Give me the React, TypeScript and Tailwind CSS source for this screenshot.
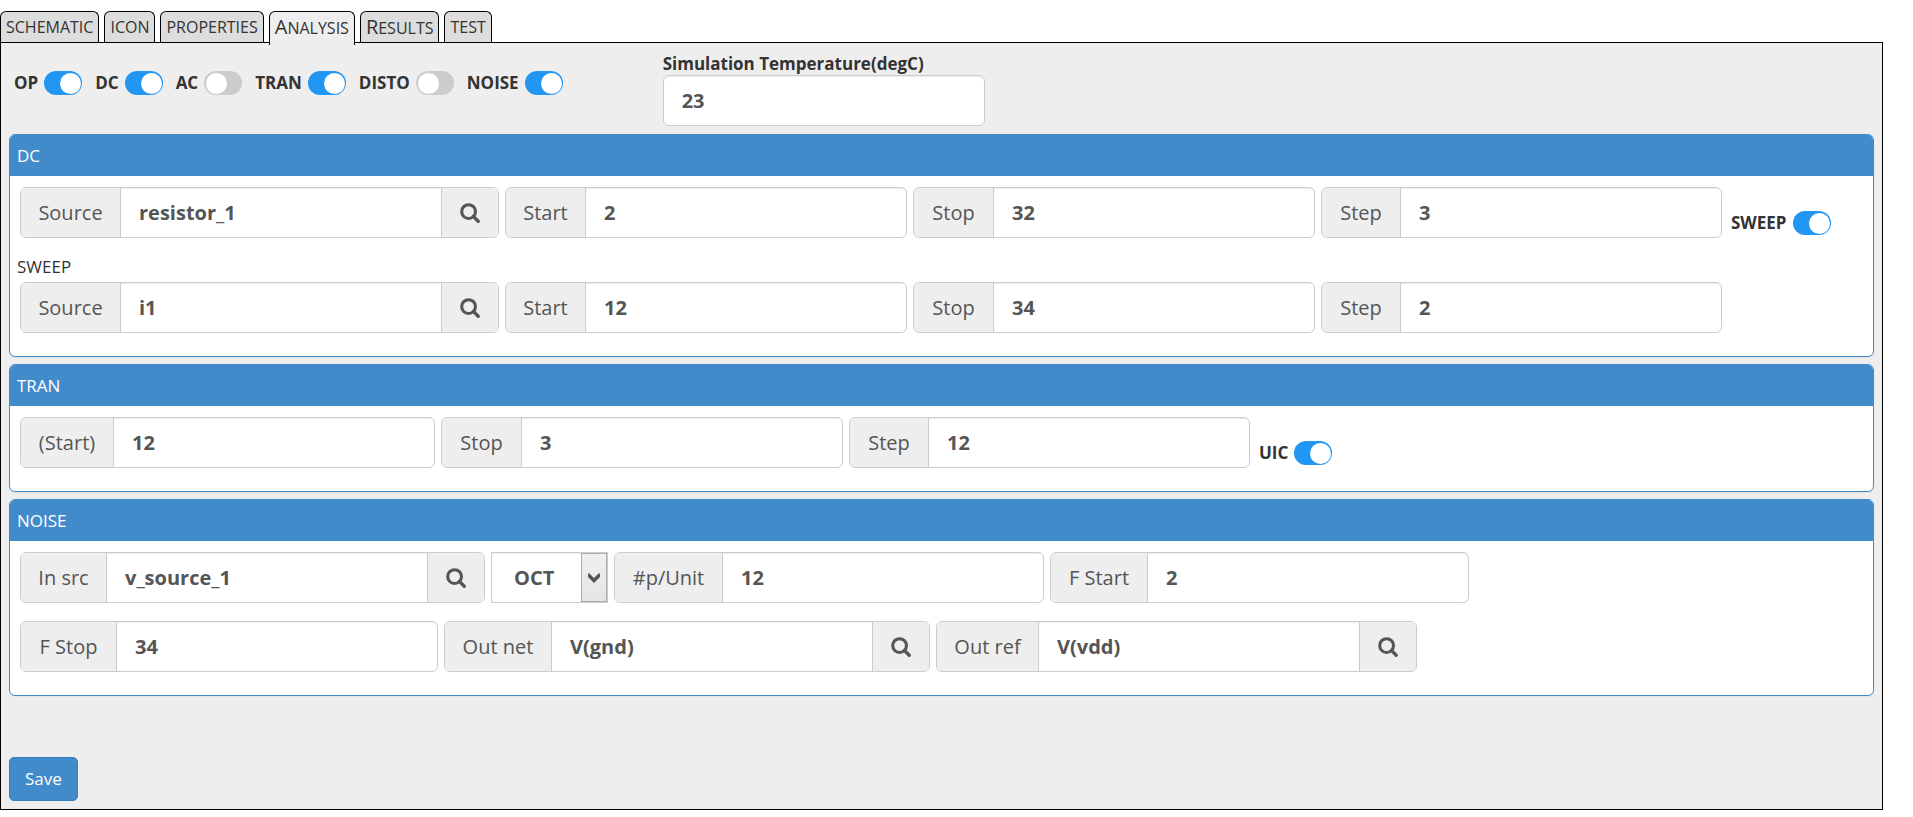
import { useId, useState } from "react";
import clsx from "clsx";

type Tab = { id: string; label: string };

const TABS: Tab[] = [
  { id: "schematic", label: "SCHEMATIC" },
  { id: "icon", label: "ICON" },
  { id: "properties", label: "PROPERTIES" },
  { id: "analysis", label: "Analysis" },
  { id: "results", label: "Results" },
  { id: "test", label: "TEST" },
];

const ANALYSES = ["OP", "DC", "AC", "TRAN", "DISTO", "NOISE"];

function SearchIcon() {
  return (
    <svg viewBox="0 0 20 20" className="h-5 w-5" fill="none" stroke="currentColor" aria-hidden="true">
      <circle cx="8.6" cy="8.6" r="6.9" strokeWidth="3.1" />
      <path d="M13.4 13.4 L18.2 18.2" strokeWidth="3.4" strokeLinecap="round" />
    </svg>
  );
}

function Toggle({ label, on, className }: { label: string; on: boolean; className?: string }) {
  const [checked, setChecked] = useState(on);

  return (
    <label className={clsx("flex items-center gap-1.5 text-[17px] leading-6 font-bold text-[#333]", className)}>
      {label}
      <input
        type="checkbox"
        checked={checked}
        onChange={(event) => setChecked(event.target.checked)}
        className="flex h-6 w-[38px] shrink-0 cursor-pointer appearance-none items-center rounded-full bg-[#ccc] px-0.5 before:h-[21px] before:w-[21px] before:rounded-full before:bg-white before:content-[''] checked:justify-end checked:bg-[#2196f3] checked:px-px"
      />
    </label>
  );
}

type FieldProps = {
  label: string;
  value: string;
  labelWidth: string;
  search?: boolean;
};

function Field({ label, value, labelWidth, search }: FieldProps) {
  const id = useId();

  return (
    <div className="flex h-[51px] overflow-hidden rounded-md border border-[#ccc] bg-white text-xl text-[#555]">
      <label
        htmlFor={id}
        className={clsx("flex shrink-0 items-center justify-center border-r border-[#ccc] bg-[#eee]", labelWidth)}
      >
        {label}
      </label>
      <input
        id={id}
        type="text"
        defaultValue={value}
        className="w-80 min-w-0 px-[18px] font-bold shadow-[inset_0_1px_1px_rgba(0,0,0,0.075)] outline-none"
      />
      {search ? (
        <button
          type="button"
          aria-label={`Search ${label}`}
          className="flex w-[57px] shrink-0 items-center justify-center border-l border-[#ccc] bg-[#eee]"
        >
          <SearchIcon />
        </button>
      ) : null}
    </div>
  );
}

function Panel({ title, children }: { title: string; children: React.ReactNode }) {
  return (
    <section className="overflow-hidden rounded-md border border-[#428bca] bg-white shadow-[0_1px_1px_rgba(0,0,0,0.05)]">
      <h2 className="flex h-[41px] items-center bg-[#428bca] px-[7px] text-[17px] text-white">{title}</h2>
      <div className="px-2.5 pt-[11px] pb-[23px]">{children}</div>
    </section>
  );
}

export default function App() {
  const [active, setActive] = useState("analysis");

  return (
    <div className="mr-[30px] pt-[11px] font-['Open_Sans','Noto_Sans',sans-serif] text-[#333]">
      <nav role="tablist" className="flex gap-[5px]">
        {TABS.map((tab) => (
          <button
            key={tab.id}
            type="button"
            role="tab"
            aria-selected={tab.id === active}
            onClick={() => setActive(tab.id)}
            className={clsx(
              "relative block rounded-t-md border border-b-0 border-black px-[5px] text-base leading-5 uppercase",
              /[a-z]/.test(tab.label) && "first-letter:text-xl first-letter:leading-5",
              tab.id === active ? "-mb-[3px] h-[34px] bg-[#eee] pb-[3px]" : "h-[31px] bg-[#ddd]"
            )}
          >
            {tab.label}
          </button>
        ))}
      </nav>

      <main className="border border-black bg-[#eee] px-2 pb-2">
        <div className="flex h-[91px] items-start">
          <div className="flex gap-[13px] pt-7 pl-[5px]">
            {ANALYSES.map((name) => (
              <Toggle key={name} label={name} on={name !== "AC" && name !== "DISTO"} />
            ))}
          </div>
          <div className="ml-[100px] flex flex-col pt-2.5">
            <label htmlFor="sim-temp" className="text-[17px] leading-[22px] font-bold">
              Simulation Temperature(degC)
            </label>
            <input
              id="sim-temp"
              type="text"
              defaultValue="23"
              className="h-[51px] w-[322px] rounded-md border border-[#ccc] bg-white px-[18px] text-xl font-bold text-[#555] shadow-[inset_0_1px_1px_rgba(0,0,0,0.075)] outline-none"
            />
          </div>
        </div>

        <div className="flex flex-col gap-[7px]">
          <Panel title="DC">
            <div className="flex flex-wrap gap-1.5">
              <Field label="Source" value="resistor_1" labelWidth="w-[100px]" search />
              <Field label="Start" value="2" labelWidth="w-20" />
              <Field label="Stop" value="32" labelWidth="w-20" />
              <Field label="Step" value="3" labelWidth="w-[79px]" />
              <Toggle label="SWEEP" on className="mb-[3px] ml-[3px] self-end" />
            </div>
            <h3 className="-ml-[3px] pt-4 pb-[3px] text-[17px] leading-[25px]">SWEEP</h3>
            <div className="flex flex-wrap gap-1.5">
              <Field label="Source" value="i1" labelWidth="w-[100px]" search />
              <Field label="Start" value="12" labelWidth="w-20" />
              <Field label="Stop" value="34" labelWidth="w-20" />
              <Field label="Step" value="2" labelWidth="w-[79px]" />
            </div>
          </Panel>

          <Panel title="TRAN">
            <div className="flex flex-wrap gap-1.5">
              <Field label="(Start)" value="12" labelWidth="w-[93px]" />
              <Field label="Stop" value="3" labelWidth="w-20" />
              <Field label="Step" value="12" labelWidth="w-[79px]" />
              <Toggle label="UIC" on className="mb-[3px] ml-[3px] self-end" />
            </div>
          </Panel>

          <Panel title="NOISE">
            <div className="flex flex-wrap gap-1.5">
              <Field label="In src" value="v_source_1" labelWidth="w-[86px]" search />
              <div className="relative">
                <select
                  aria-label="Sweep type"
                  defaultValue="OCT"
                  className="h-[51px] w-[117px] appearance-none border border-[#ccc] bg-white pl-[22px] text-xl font-bold text-[#555] shadow-[inset_0_1px_1px_rgba(0,0,0,0.075)] outline-none"
                >
                  <option>DEC</option>
                  <option>OCT</option>
                  <option>LIN</option>
                </select>
                <span className="pointer-events-none absolute inset-y-px right-px flex w-[26px] items-center justify-center border border-[#aaa] bg-linear-to-b from-[#f0f0f0] to-[#e4e4e4] text-[#555]">
                  <svg viewBox="0 0 12 10" className="h-2.5 w-3" fill="currentColor" aria-hidden="true">
                    <path d="M0 0.5 L1.5 0.5 L6 5 L10.5 0.5 L12 0.5 V4 L6 10 L0 4 Z" />
                  </svg>
                </span>
              </div>
              <Field label="#p/Unit" value="12" labelWidth="w-[108px]" />
              <Field label="F Start" value="2" labelWidth="w-[97px]" />
            </div>
            <div className="flex flex-wrap gap-1.5 pt-[18px]">
              <Field label="F Stop" value="34" labelWidth="w-24" />
              <Field label="Out net" value="V(gnd)" labelWidth="w-[107px]" search />
              <Field label="Out ref" value="V(vdd)" labelWidth="w-[102px]" search />
            </div>
          </Panel>
        </div>

        <button
          type="button"
          className="mt-[61px] block h-11 rounded-[5px] border border-[#357ebd] bg-[#428bca] px-[15px] text-[17px] text-white"
        >
          Save
        </button>
      </main>
    </div>
  );
}
